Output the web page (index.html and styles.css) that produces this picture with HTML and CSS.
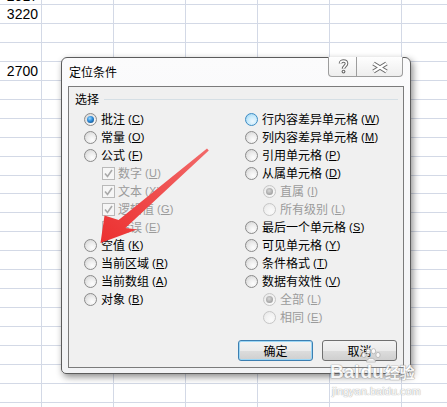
FILE: index.html
```html
<!DOCTYPE html>
<html lang="zh-CN">
<head>
<meta charset="utf-8">
<title>定位条件</title>
<link rel="stylesheet" href="styles.css">
</head>
<body>
<div class="sheet">
  <div class="row r0"><div class="c0">2917</div></div>
  <div class="row"><div class="c0">3220</div></div>
  <div class="row"></div>
  <div class="row"></div>
  <div class="row"><div class="c0">2700</div></div>
  <div class="row"></div>
  <div class="row"></div>
  <div class="row"></div>
  <div class="row"></div>
  <div class="row"></div>
  <div class="row short"></div>
  <div class="row"></div>
  <div class="row"></div>
  <div class="row"></div>
  <div class="row"></div>
  <div class="row"></div>
  <div class="row"></div>
  <div class="row"></div>
  <div class="row"></div>
  <div class="row"></div>
  <div class="row"></div>
  <div class="row"></div>
</div>

<div class="dialog">
  <div class="titlebar">
    <span class="title">定位条件</span>
    <div class="caption-btns">
      <span class="cbtn help">
        <svg width="27" height="19" viewBox="0 0 27 19">
          <path d="M11.5 6.5 C11.5 3.2 17.5 3.2 17.5 6.5 C17.5 9 14.5 9 14.5 11.8" fill="none" stroke="#6a6a6a" stroke-width="3.6"/>
          <path d="M11.5 6.5 C11.5 3.2 17.5 3.2 17.5 6.5 C17.5 9 14.5 9 14.5 11.8" fill="none" stroke="#ffffff" stroke-width="1.6"/>
          <circle cx="14.5" cy="14.6" r="1.9" fill="#6a6a6a"/>
          <circle cx="14.5" cy="14.6" r="0.8" fill="#ffffff"/>
        </svg>
      </span>
      <span class="cbtn close">
        <svg width="45" height="19" viewBox="0 0 45 19">
          <path d="M16.5 6.5 L29.5 14.5 M29.5 6.5 L16.5 14.5" stroke="#6a6a6a" stroke-width="4.4"/>
          <path d="M16.5 6.5 L29.5 14.5 M29.5 6.5 L16.5 14.5" stroke="#ffffff" stroke-width="2.2"/>
        </svg>
      </span>
    </div>
  </div>
  <div class="client">
    <div class="group">
      <div class="legend"><span>选择</span><i class="rule"></i></div>
      <div class="cols">
        <div class="col">
          <div class="opt"><span class="radio on"></span>批注<span class="acc">(<u>C</u>)</span></div>
          <div class="opt"><span class="radio"></span>常量<span class="acc">(<u>O</u>)</span></div>
          <div class="opt"><span class="radio"></span>公式<span class="acc">(<u>F</u>)</span></div>
          <div class="opt sub dis"><span class="chk"><svg width="11" height="11" viewBox="0 0 11 11"><path d="M2 5.5 L4.5 8.5 L9 2" fill="none" stroke="#a9a9a9" stroke-width="1.6"/></svg></span>数字<span class="acc">(<u>U</u>)</span></div>
          <div class="opt sub dis"><span class="chk"><svg width="11" height="11" viewBox="0 0 11 11"><path d="M2 5.5 L4.5 8.5 L9 2" fill="none" stroke="#a9a9a9" stroke-width="1.6"/></svg></span>文本<span class="acc">(<u>X</u>)</span></div>
          <div class="opt sub dis"><span class="chk"><svg width="11" height="11" viewBox="0 0 11 11"><path d="M2 5.5 L4.5 8.5 L9 2" fill="none" stroke="#a9a9a9" stroke-width="1.6"/></svg></span>逻辑值<span class="acc">(<u>G</u>)</span></div>
          <div class="opt sub dis"><span class="chk"><svg width="11" height="11" viewBox="0 0 11 11"><path d="M2 5.5 L4.5 8.5 L9 2" fill="none" stroke="#a9a9a9" stroke-width="1.6"/></svg></span>错误<span class="acc">(<u>E</u>)</span></div>
          <div class="opt gap"><span class="radio"></span>空值<span class="acc">(<u>K</u>)</span></div>
          <div class="opt"><span class="radio"></span>当前区域<span class="acc">(<u>R</u>)</span></div>
          <div class="opt"><span class="radio"></span>当前数组<span class="acc">(<u>A</u>)</span></div>
          <div class="opt"><span class="radio"></span>对象<span class="acc">(<u>B</u>)</span></div>
        </div>
        <div class="col">
          <div class="opt"><span class="radio hot"></span>行内容差异单元格<span class="acc">(<u>W</u>)</span></div>
          <div class="opt"><span class="radio"></span>列内容差异单元格<span class="acc">(<u>M</u>)</span></div>
          <div class="opt"><span class="radio"></span>引用单元格<span class="acc">(<u>P</u>)</span></div>
          <div class="opt"><span class="radio"></span>从属单元格<span class="acc">(<u>D</u>)</span></div>
          <div class="opt sub dis"><span class="radio on"></span>直属<span class="acc">(<u>I</u>)</span></div>
          <div class="opt sub dis"><span class="radio"></span>所有级别<span class="acc">(<u>L</u>)</span></div>
          <div class="opt"><span class="radio"></span>最后一个单元格<span class="acc">(<u>S</u>)</span></div>
          <div class="opt"><span class="radio"></span>可见单元格<span class="acc">(<u>Y</u>)</span></div>
          <div class="opt"><span class="radio"></span>条件格式<span class="acc">(<u>T</u>)</span></div>
          <div class="opt"><span class="radio"></span>数据有效性<span class="acc">(<u>V</u>)</span></div>
          <div class="opt sub dis"><span class="radio on"></span>全部<span class="acc">(<u>L</u>)</span></div>
          <div class="opt sub dis"><span class="radio"></span>相同<span class="acc">(<u>E</u>)</span></div>
        </div>
      </div>
    </div>
    <div class="buttons">
      <button class="btn default">确定</button>
      <button class="btn">取消</button>
    </div>
  </div>
</div>

<svg class="arrow" width="447" height="407" viewBox="0 0 447 407">
  <defs>
    <linearGradient id="ag" x1="1" y1="0" x2="0" y2="1">
      <stop offset="0" stop-color="#f26a6a"/>
      <stop offset="1" stop-color="#ec2f2f"/>
    </linearGradient>
  </defs>
  <polygon points="207,148.5 208.8,150.5 125.4,227.9 137,229.5 100.5,243 104.5,215.5 118.6,220.1" fill="url(#ag)"/>
</svg>

<div class="wm">
  <div class="wm-top">
    <span class="wm-bai">Bai</span>
    <span class="wm-du">du<svg class="paw" width="22" height="16" viewBox="0 0 22 16">
      <g fill="#ffffff" stroke="#b8b8b8" stroke-width="1">
        <ellipse cx="4" cy="7" rx="2.2" ry="2.6"/>
        <ellipse cx="8.5" cy="3.2" rx="2.2" ry="2.6"/>
        <ellipse cx="13.5" cy="3.2" rx="2.2" ry="2.6"/>
        <ellipse cx="18" cy="7" rx="2.2" ry="2.6"/>
        <path d="M6.5 14 C6.5 9 15.5 9 15.5 14 Z"/>
      </g>
    </svg></span>
    <span class="wm-jy">经验</span>
  </div>
  <div class="wm-url">jingyan.baidu.com</div>
</div>
</body>
</html>
```

FILE: styles.css
```css
html, body {
  margin: 0;
  padding: 0;
}
body {
  width: 447px;
  height: 407px;
  overflow: hidden;
  position: relative;
  background: #ffffff;
  font-family: "Noto Sans CJK SC", "Noto Sans", sans-serif;
}

/* spreadsheet background */
.sheet {
  width: 447px;
  height: 407px;
  overflow: hidden;
  background-image: linear-gradient(to right, #d3d9e6 0, #d3d9e6 1px, transparent 1px);
  background-size: 72px 100%;
  background-position: 41px 0;
}
.row {
  height: 18px;
  border-bottom: 1px solid #d3d9e6;
  display: flex;
  align-items: center;
  overflow: hidden;
}
.row.r0 {
  height: 4px;
  align-items: flex-end;
}
.row.short {
  height: 17px;
}
.c0 {
  width: 41px;
  box-sizing: border-box;
  text-align: right;
  padding-right: 3px;
  font: 14px/18px "Liberation Sans", Arial, sans-serif;
  color: #000;
}
.r0 .c0 {
  line-height: 16px;
  flex: none;
}

/* dialog window */
.dialog {
  position: absolute;
  left: 61px;
  top: 57px;
  width: 350px;
  height: 317px;
  box-sizing: border-box;
  border: 1px solid #5c5c5c;
  border-radius: 6px 6px 5px 5px;
  background: linear-gradient(#fbfbfc, #f2f3f5);
  box-shadow: 2px 3px 7px rgba(0, 0, 0, 0.45);
  display: flex;
  flex-direction: column;
}
.titlebar {
  height: 28px;
  display: flex;
  align-items: center;
  padding-left: 7px;
  flex: none;
}
.title {
  flex: 1;
  font-size: 12px;
  color: #000;
  line-height: 16px;
}
.caption-btns {
  align-self: flex-start;
  margin-top: -1px;
  margin-right: 7px;
  display: flex;
}
.cbtn {
  height: 20px;
  box-sizing: border-box;
  border: 1px solid #9d9d9d;
  border-top: none;
  background: linear-gradient(#fefefe, #eeeeee);
  display: block;
}
.cbtn svg {
  display: block;
}
.cbtn.help {
  width: 29px;
  border-radius: 0 0 0 4px;
}
.cbtn.close {
  width: 46px;
  border-left: none;
  border-radius: 0 0 4px 0;
}

.client {
  margin: 0 6px 5px 6px;
  height: 282px;
  box-sizing: border-box;
  border: 1px solid #7b7b7b;
  background: #f0f0f0;
  display: flex;
  flex-direction: column;
}
.legend {
  margin-top: 4px;
  height: 16px;
  padding-left: 6px;
  display: flex;
  align-items: center;
  font-size: 12px;
  line-height: 16px;
  color: #000;
}
.rule {
  flex: 1;
  height: 1px;
  margin: 1px 5px 0 5px;
  background: #d5dfe5;
}
.cols {
  margin-top: 3px;
  padding-left: 15px;
  display: grid;
  grid-template-columns: 161px 1fr;
}
.opt {
  height: 18px;
  display: flex;
  align-items: center;
  gap: 4px;
  font-size: 12px;
  line-height: 16px;
  color: #000;
  white-space: nowrap;
}
.opt.sub {
  padding-left: 18px;
}
.opt.dis {
  color: #9b9b9b;
}
.acc {
  font-family: "Liberation Sans", Arial, sans-serif;
  font-size: 11px;
  margin-left: -1px;
  letter-spacing: 0.3px;
}
.acc u {
  text-decoration-thickness: 1px;
  text-underline-offset: 1px;
}

/* radio buttons */
.radio {
  width: 13px;
  height: 13px;
  flex: none;
  box-sizing: border-box;
  border-radius: 50%;
  border: 1px solid #8b8b8b;
  background: radial-gradient(circle at 65% 70%, #fdfdfd 0, #ececec 45%, #cfcfcf 100%);
  position: relative;
}
.radio.on::after {
  content: "";
  position: absolute;
  left: 2px;
  top: 2px;
  width: 7px;
  height: 7px;
  border-radius: 50%;
  background: radial-gradient(circle at 40% 35%, #9ad9ff 0, #2c8ad8 45%, #0d3d6b 100%);
}
.radio.hot {
  border-color: #3d8cc4;
  background: radial-gradient(circle at 60% 65%, #eef8fe 0, #c8eafb 50%, #8ccbee 100%);
}
.dis .radio {
  border-color: #c6c6c6;
  background: radial-gradient(circle at 65% 70%, #fafafa 0, #f2f2f2 50%, #e3e3e3 100%);
}
.dis .radio.on::after {
  background: radial-gradient(circle at 45% 40%, #d8d8d8 0, #a9a9a9 60%, #8f8f8f 100%);
}

/* checkbox (disabled, checked) */
.chk {
  width: 13px;
  height: 13px;
  flex: none;
  box-sizing: border-box;
  border: 1px solid #b9b9b9;
  background: #f6f6f6;
  display: flex;
  align-items: center;
  justify-content: center;
  margin-right: -1px;
}
.chk svg {
  display: block;
}

/* buttons */
.buttons {
  margin-top: auto;
  display: flex;
  justify-content: flex-end;
  gap: 9px;
  padding: 0 6px 6px 0;
}
.btn {
  width: 75px;
  height: 21px;
  box-sizing: border-box;
  margin: 0;
  padding: 0;
  border: 1px solid #707070;
  border-radius: 3px;
  background: linear-gradient(#f3f3f3 0%, #ebebeb 50%, #dddddd 50%, #cfcfcf 100%);
  font-family: "Noto Sans CJK SC", sans-serif;
  font-size: 12px;
  line-height: 17px;
  color: #000;
}
.btn.default {
  border-color: #3c7fb1;
  box-shadow: inset 0 0 0 1px #9cd6f5;
}

/* red annotation arrow */
.arrow {
  position: absolute;
  left: 0;
  top: 0;
  pointer-events: none;
}

/* watermark */
.wm {
  position: absolute;
  left: 330px;
  top: 352px;
  width: 92px;
  opacity: 0.85;
  pointer-events: none;
}
.wm-top {
  display: flex;
  align-items: flex-end;
  height: 30px;
}
.wm-bai, .wm-du {
  font: bold 19px/20px "Liberation Sans", Arial, sans-serif;
  color: #ffffff;
  text-shadow: 0 0 1px #8f8f8f, 0 0 1px #8f8f8f, 0 0 1px #8f8f8f;
}
.wm-du {
  position: relative;
  margin-left: 1px;
}
.paw {
  position: absolute;
  left: -1px;
  top: -14px;
}
.wm-jy {
  font: bold 15px/20px "Noto Sans CJK SC", sans-serif;
  color: #ffffff;
  margin-left: 1px;
  text-shadow: 0 0 1px #8f8f8f, 0 0 1px #8f8f8f, 0 0 1px #8f8f8f;
}
.wm-url {
  font: 11px/12px "Liberation Sans", Arial, sans-serif;
  color: #ffffff;
  text-shadow: 0 0 1px #9a9a9a, 0 0 1px #9a9a9a;
  margin-top: 3px;
  padding-left: 2px;
}
```
